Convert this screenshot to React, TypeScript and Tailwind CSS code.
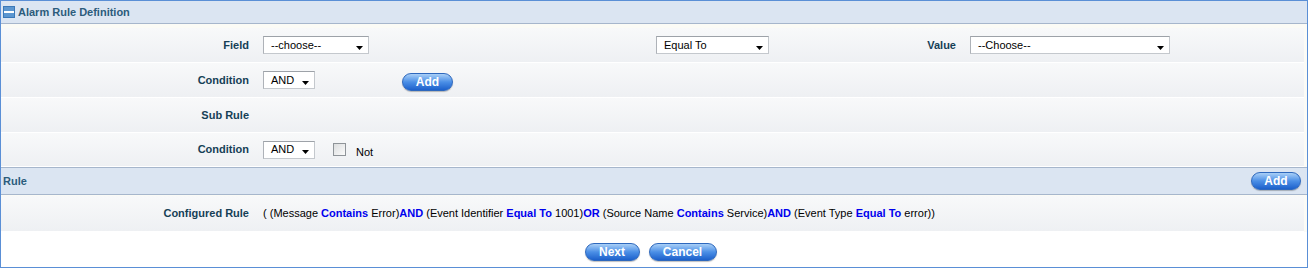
import React from "react";

const LABEL = "font-['Liberation_Sans',Arial,sans-serif] text-[11px] font-bold text-[#163f56]";
const BODY = "font-['Liberation_Sans',Arial,sans-serif] text-[11px] text-black";

function Select({ value, width }: { value: string; width: string }) {
  return (
    <div
      className={`${width} h-[18px] flex items-center justify-between bg-white border border-[#c4c8cd] border-t-[#9da2a8] border-l-[#aeb2b8] pl-[7px] pr-[5px] ${BODY}`}
    >
      <span className="leading-none">{value}</span>
      <svg width="7" height="4" viewBox="0 0 7 4" className="mt-[5px]">
        <path d="M0 0H7L3.5 4Z" fill="#000" />
      </svg>
    </div>
  );
}

function BlueButton({ label, width }: { label: string; width: string }) {
  return (
    <button
      className={`${width} h-[18px] rounded-full border border-[#2e68bd] bg-linear-to-b from-[#a9cff6] via-[#4b8fe6] to-[#1c60cb] text-white font-['Liberation_Sans',Arial,sans-serif] text-[12px] font-bold leading-none shadow-[0_1px_1px_rgba(0,0,0,0.25)]`}
    >
      {label}
    </button>
  );
}

function Row({ children, label, h = "h-[35px]" }: { children?: React.ReactNode; label: string; h?: string }) {
  return (
    <div className={`${h} flex items-center bg-linear-to-b from-[#f8f9fa] to-[#eef0f3] border-b border-white`}>
      <div className={`w-[248px] text-right ${LABEL}`}>{label}</div>
      <div className="ml-[14px] flex items-center">{children}</div>
    </div>
  );
}

const B = ({ children }: { children: React.ReactNode }) => (
  <span className="font-bold text-[#0000ee]">{children}</span>
);

export default function App() {
  return (
    <div className="w-[1308px] h-[268px] bg-white border border-[#5a8fd6] flex flex-col">
      <div className="h-[23px] shrink-0 flex items-center gap-[3px] pl-[2px] bg-[#dbe5f2] border-b border-[#a6b6cc]">
        <svg width="12" height="12" viewBox="0 0 12 12">
          <rect x="0" y="0" width="12" height="12" fill="#3a78b8" />
          <rect x="1" y="1" width="10" height="10" fill="#5b96d0" />
          <rect x="1" y="5" width="10" height="2" fill="#fff" />
        </svg>
        <span className="font-['Liberation_Sans',Arial,sans-serif] text-[11px] font-bold text-[#2c5c7c]">
          Alarm Rule Definition
        </span>
      </div>

      <div className="pr-[3px] pt-[4px] bg-[#fbfbf6]">
        <Row label="Field">
          <Select value="--choose--" width="w-[106px]" />
          <div className="ml-[287px]">
            <Select value="Equal To" width="w-[113px]" />
          </div>
          <div className={`w-[187px] text-right ${LABEL}`}>Value</div>
          <div className="ml-[14px]">
            <Select value="--Choose--" width="w-[200px]" />
          </div>
        </Row>
        <Row label="Condition">
          <Select value="AND" width="w-[52px]" />
          <div className="ml-[87px]">
            <BlueButton label="Add" width="w-[51px]" />
          </div>
        </Row>
        <Row label="Sub Rule" />
        <Row label="Condition" h="h-[34px]">
          <Select value="AND" width="w-[52px]" />
          <div className="ml-[18px] w-[13px] h-[13px] border border-[#8f9499] bg-linear-to-br from-[#dcdedf] to-[#fbfbfb]" />
          <span className={`ml-[10px] mt-[5px] ${BODY}`}>Not</span>
        </Row>
      </div>

      <div className="h-[28px] shrink-0 flex items-center justify-between pl-[2px] pr-[6px] bg-[#dbe5f2] border-y border-[#a6b6cc]">
        <span className="font-['Liberation_Sans',Arial,sans-serif] text-[11px] font-bold text-[#2c5c7c]">Rule</span>
        <BlueButton label="Add" width="w-[50px]" />
      </div>

      <div className="pr-[3px] pt-[1px] bg-[#fbfbf6]">
        <div className="h-[36px] flex items-center bg-linear-to-b from-[#f8f9fa] to-[#eef0f3] border-b border-white">
          <div className={`w-[248px] text-right ${LABEL}`}>Configured Rule</div>
          <div className={`ml-[14px] ${BODY}`}>
            ( (Message <B>Contains</B> Error)<B>AND</B> (Event Identifier <B>Equal To</B> 1001)<B>OR</B> (Source Name{" "}
            <B>Contains</B> Service)<B>AND</B> (Event Type <B>Equal To</B> error))
          </div>
        </div>
      </div>

      <div className="flex-1 flex items-center justify-center gap-[9px] pr-[7px] pt-[4px]">
        <BlueButton label="Next" width="w-[55px]" />
        <BlueButton label="Cancel" width="w-[68px]" />
      </div>
    </div>
  );
}
